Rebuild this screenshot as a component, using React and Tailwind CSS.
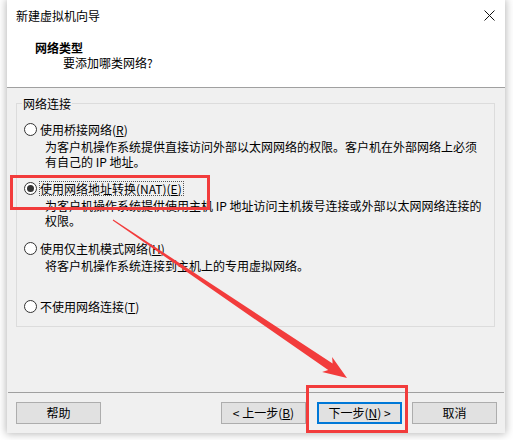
import React from 'react';

const Radio = ({ checked }) => (
  <span className="w-[13px] h-[13px] rounded-full border border-[#333] bg-white flex items-center justify-center shrink-0">
    {checked && <span className="w-[7px] h-[7px] rounded-full bg-[#333]" />}
  </span>
);

const Option = ({ label, checked, desc, className }) => (
  <div className={className}>
    <div className="flex items-center h-[15px] pl-[7px]">
      <Radio checked={checked} />
      <span
        className={`ml-[2px] pr-px border leading-[13px] whitespace-nowrap ${
          checked ? 'border-dotted border-[#555]' : 'border-transparent'
        }`}
      >
        {label}
      </span>
    </div>
    {desc && (
      <div className="mt-[2px] pl-[28px] leading-[15px] whitespace-nowrap">{desc}</div>
    )}
  </div>
);

const Button = ({ children, primary, className = '' }) => (
  <button
    className={`w-[85px] h-[22px] bg-[#e1e1e1] flex items-center justify-center text-[12px] leading-none text-black ${
      primary ? 'border-2 border-[#0078d7]' : 'border border-[#adadad]'
    } ${className}`}
  >
    {children}
  </button>
);

export default function App() {
  return (
    <div className="relative w-[513px] h-[440px] bg-white overflow-hidden font-[family-name:'Noto_Sans_CJK_SC','Noto_Sans',sans-serif] text-[12px] text-black">
      <div className="ml-[7px] w-[498px] h-[433px] bg-[#f0f0f0] flex flex-col shadow-[0_0_8px_1px_rgba(0,0,0,0.28)]">
        {/* header */}
        <div className="bg-white h-[88px] border-b border-[#a0a0a0]">
          <div className="h-[31px] flex items-center justify-between pl-[9px] pr-[10px]">
            <span className="leading-[15px]">新建虚拟机向导</span>
            <svg width="11" height="11" viewBox="0 0 11 11" className="mb-px">
              <path d="M0.5 0.5 L10.5 10.5 M10.5 0.5 L0.5 10.5" stroke="#111" strokeWidth="1" fill="none" />
            </svg>
          </div>
          <div className="mt-[9px] pl-[28px] font-bold leading-[15px]">网络类型</div>
          <div className="pl-[56px] leading-[15px]">要添加哪类网络?</div>
        </div>

        {/* body */}
        <fieldset className="mt-[8px] ml-[9px] mr-[10px] border border-[#dcdcdc] pb-[12px]">
          <legend className="ml-[5px] px-px leading-[15px]">网络连接</legend>
          <Option
            className="mt-[11px]"
            label={<>使用桥接网络(<u>R</u>)</>}
            desc={
              <>
                为客户机操作系统提供直接访问外部以太网网络的权限。客户机在外部网络上必须
                <br />
                有自己的 IP 地址。
              </>
            }
          />
          <Option
            className="mt-[12px]"
            checked
            label={<>使用网络地址转换(NAT)(<u>E</u>)</>}
            desc={
              <>
                为客户机操作系统提供使用主机 IP 地址访问主机拨号连接或外部以太网网络连接的
                <br />
                权限。
              </>
            }
          />
          <Option
            className="mt-[13px]"
            label={<>使用仅主机模式网络(<u>H</u>)</>}
            desc={<>将客户机操作系统连接到主机上的专用虚拟网络。</>}
          />
          <Option className="mt-[26px]" label={<>不使用网络连接(<u>T</u>)</>} />
        </fieldset>

        {/* footer */}
        <div className="mt-auto mx-px border-t border-[#a0a0a0] pt-[9px] pb-[9px] pl-[8px] pr-[7px] flex items-center justify-between">
          <Button>帮助</Button>
          <div className="flex">
            <Button>&lt; 上一步(<u>B</u>)</Button>
            <Button primary className="ml-[11px]">下一步(<u>N</u>) &gt;</Button>
            <Button className="ml-[10px]">取消</Button>
          </div>
        </div>
      </div>

      {/* annotations */}
      <div className="absolute left-[10px] top-[175px] w-[200px] h-[35px] border-[3px] border-[#f23c3c] pointer-events-none" />
      <div className="absolute left-[306px] top-[385px] w-[102px] h-[48px] border-[3px] border-[#f23c3c] pointer-events-none" />
      <svg className="absolute left-0 top-0 pointer-events-none" width="513" height="440">
        <polygon
          points="112.7,220.4 328.2,370.1 322.1,372.1 347,378 332.1,357.1 332.6,363.5 113.3,219.6"
          fill="#f23c3c"
        />
      </svg>
    </div>
  );
}
